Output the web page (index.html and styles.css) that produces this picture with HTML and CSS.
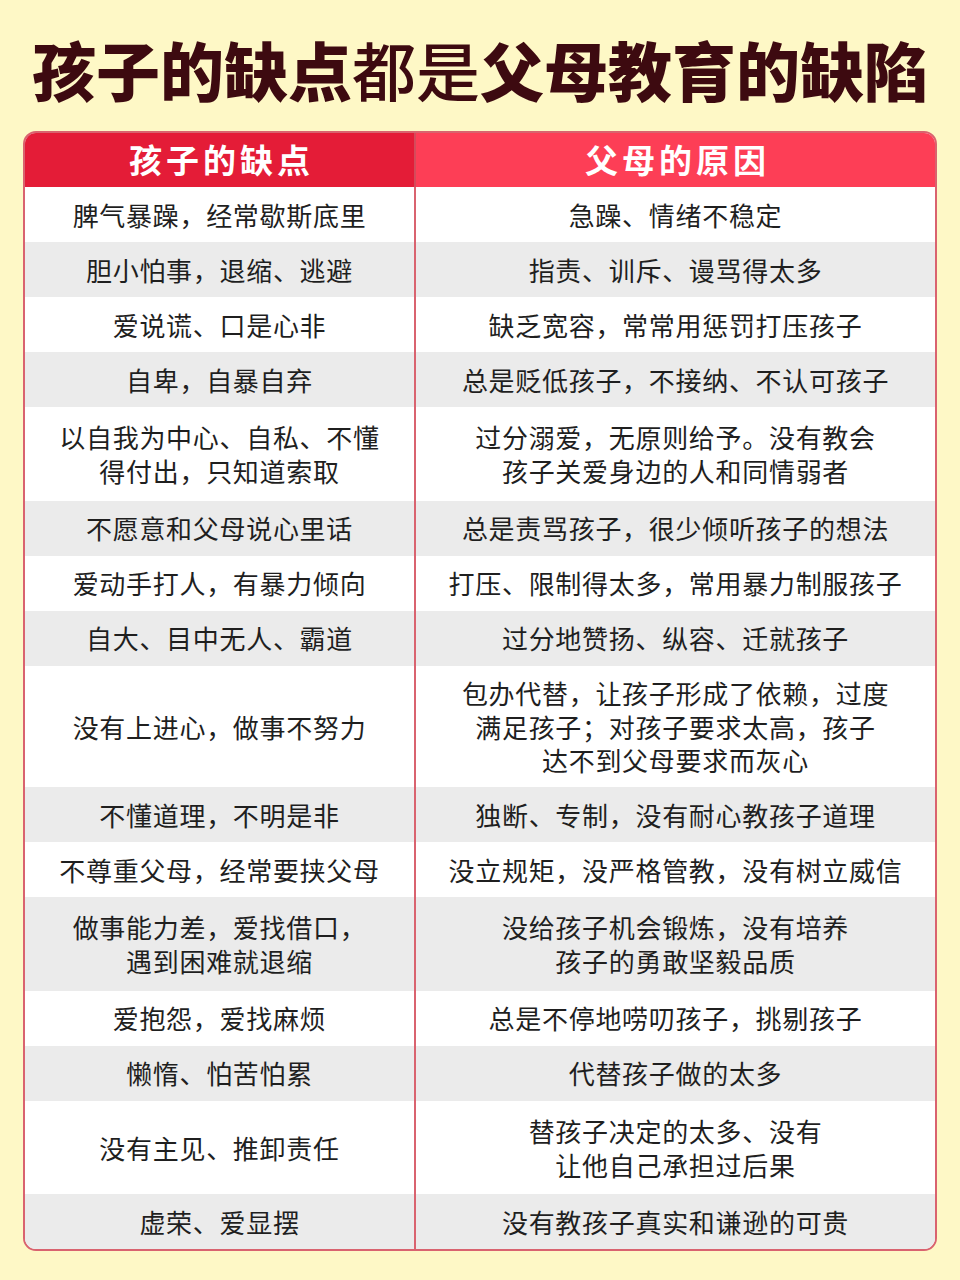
FILE: index.html
```html
<!DOCTYPE html>
<html lang="zh-CN">
<head>
<meta charset="utf-8">
<title>孩子的缺点都是父母教育的缺陷</title>
<link rel="stylesheet" href="styles.css">
</head>
<body>
<h1 class="title"><span class="heavy">孩子的缺点</span><span class="light">都是</span><span class="heavy">父母教育的缺陷</span></h1>
<div class="table">
  <div class="head left">孩子的缺点</div>
  <div class="head right">父母的原因</div>

  <div class="cell left">脾气暴躁，经常歇斯底里</div>
  <div class="cell right">急躁、情绪不稳定</div>

  <div class="cell left alt">胆小怕事，退缩、逃避</div>
  <div class="cell right alt">指责、训斥、谩骂得太多</div>

  <div class="cell left">爱说谎、口是心非</div>
  <div class="cell right">缺乏宽容，常常用惩罚打压孩子</div>

  <div class="cell left alt">自卑，自暴自弃</div>
  <div class="cell right alt">总是贬低孩子，不接纳、不认可孩子</div>

  <div class="cell left two">以自我为中心、自私、不懂<br>得付出，只知道索取</div>
  <div class="cell right two">过分溺爱，无原则给予。没有教会<br>孩子关爱身边的人和同情弱者</div>

  <div class="cell left alt">不愿意和父母说心里话</div>
  <div class="cell right alt">总是责骂孩子，很少倾听孩子的想法</div>

  <div class="cell left">爱动手打人，有暴力倾向</div>
  <div class="cell right">打压、限制得太多，常用暴力制服孩子</div>

  <div class="cell left alt">自大、目中无人、霸道</div>
  <div class="cell right alt">过分地赞扬、纵容、迁就孩子</div>

  <div class="cell left three">没有上进心，做事不努力</div>
  <div class="cell right three">包办代替，让孩子形成了依赖，过度<br>满足孩子；对孩子要求太高，孩子<br>达不到父母要求而灰心</div>

  <div class="cell left alt">不懂道理，不明是非</div>
  <div class="cell right alt">独断、专制，没有耐心教孩子道理</div>

  <div class="cell left">不尊重父母，经常要挟父母</div>
  <div class="cell right">没立规矩，没严格管教，没有树立威信</div>

  <div class="cell left alt two">做事能力差，爱找借口，<br>遇到困难就退缩</div>
  <div class="cell right alt two">没给孩子机会锻炼，没有培养<br>孩子的勇敢坚毅品质</div>

  <div class="cell left">爱抱怨，爱找麻烦</div>
  <div class="cell right">总是不停地唠叨孩子，挑剔孩子</div>

  <div class="cell left alt">懒惰、怕苦怕累</div>
  <div class="cell right alt">代替孩子做的太多</div>

  <div class="cell left two">没有主见、推卸责任</div>
  <div class="cell right two">替孩子决定的太多、没有<br>让他自己承担过后果</div>

  <div class="cell left alt">虚荣、爱显摆</div>
  <div class="cell right alt">没有教孩子真实和谦逊的可贵</div>
</div>
</body>
</html>
```
FILE: styles.css
```css
html, body {
  margin: 0;
  padding: 0;
}
body {
  background: #fef8c6;
  font-family: "Noto Sans CJK SC", "Noto Sans", sans-serif;
  width: 960px;
  min-height: 1280px;
}
.title {
  margin: 0;
  padding-top: 36px;
  height: 64px;
  font-size: 64px;
  line-height: 64px;
  text-align: center;
  color: #3d0a10;
  white-space: nowrap;
}
.title .heavy {
  font-weight: 900;
}
.title .light {
  font-weight: 500;
}
.table {
  margin: 31px 23px 0;
  border: 2px solid #d9636f;
  border-radius: 13px;
  overflow: hidden;
  display: grid;
  grid-template-columns: 389px 1fr;
  background: #ffffff;
}
.head {
  height: 54px;
  line-height: 52px;
  text-align: center;
  color: #ffffff;
  font-size: 33px;
  font-weight: 700;
  letter-spacing: 4px;
  padding-left: 4px;
}
.head.left {
  background: #e41c37;
}
.head.right {
  background: #fd3e56;
  border-left: 2px solid #d54a5a;
}
.cell {
  padding: 10.5px 0;
  line-height: 34px;
  font-size: 26px;
  letter-spacing: 0.7px;
  color: #1f1f1f;
  text-align: center;
  background: #ffffff;
  display: flex;
  align-items: center;
  justify-content: center;
}
.cell.right {
  border-left: 2px solid #d9636f;
}
.cell.alt {
  background: #ebebeb;
}
.cell.two {
  min-height: 68px;
  padding: 13px 0 12.5px;
}
.cell.three {
  min-height: 101px;
  line-height: 33.5px;
  padding: 10.5px 0 10px;
}
```
